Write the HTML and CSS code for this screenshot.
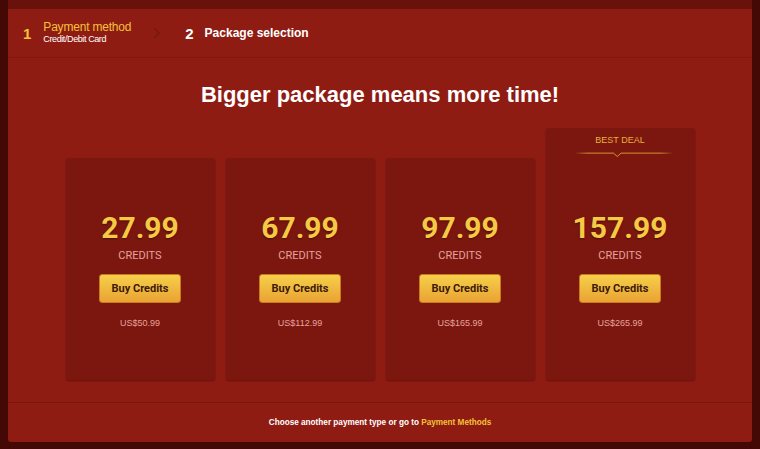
FILE: index.html
```html
<!DOCTYPE html>
<html lang="en">
<head>
    <meta charset="UTF-8">
    <meta name="viewport" content="width=device-width, initial-scale=1.0">
    <title>Package selection</title>
    <link rel="stylesheet" href="styles.css">
</head>
<body>

    <div class="wrap">
        <div class="topbar"></div>

        <div class="panel">
            <!-- Steps -->
            <div class="steps">
                <div class="step done">
                    <span class="step-num">1</span>
                    <div class="step-text">
                        <div class="step-title">Payment method</div>
                        <div class="step-sub">Credit/Debit Card</div>
                    </div>
                </div>
                <svg class="chevron" width="8" height="12" viewBox="0 0 8 12">
                    <path d="M1 1 L6 6 L1 11" fill="none" stroke="#7a170f" stroke-width="1.5"/>
                </svg>
                <div class="step active">
                    <span class="step-num">2</span>
                    <div class="step-title">Package selection</div>
                </div>
            </div>

            <h1 class="title">Bigger package means more time!</h1>

            <!-- Packages -->
            <div class="packages">
                <div class="card">
                    <div class="price">27.99</div>
                    <div class="unit">CREDITS</div>
                    <button class="buy-btn">Buy Credits</button>
                    <div class="cost">US$50.99</div>
                </div>
                <div class="card">
                    <div class="price">67.99</div>
                    <div class="unit">CREDITS</div>
                    <button class="buy-btn">Buy Credits</button>
                    <div class="cost">US$112.99</div>
                </div>
                <div class="card">
                    <div class="price">97.99</div>
                    <div class="unit">CREDITS</div>
                    <button class="buy-btn">Buy Credits</button>
                    <div class="cost">US$165.99</div>
                </div>
                <div class="card best">
                    <div class="best-head">
                        <div class="best-label">BEST DEAL</div>
                        <svg class="best-line" width="128" height="8" viewBox="0 0 128 8">
                            <defs>
                                <linearGradient id="fade" x1="0" x2="1" y1="0" y2="0">
                                    <stop offset="0" stop-color="#e0a030" stop-opacity="0.1"/>
                                    <stop offset="0.12" stop-color="#e0a030"/>
                                    <stop offset="0.88" stop-color="#e0a030"/>
                                    <stop offset="1" stop-color="#e0a030" stop-opacity="0.1"/>
                                </linearGradient>
                            </defs>
                            <path d="M0 1.5 L50 1.5 L55 6 L60 1.5 L128 1.5" fill="none" stroke="url(#fade)" stroke-width="1.2"/>
                        </svg>
                    </div>
                    <div class="price">157.99</div>
                    <div class="unit">CREDITS</div>
                    <button class="buy-btn">Buy Credits</button>
                    <div class="cost">US$265.99</div>
                </div>
            </div>

            <div class="footer">
                Choose another payment type or go to <a href="#">Payment Methods</a>
            </div>
        </div>
    </div>

</body>
</html>
```

FILE: styles.css
```css
body {
    background-color: #440905;
    margin: 0;
    padding: 0;
    font-family: "Liberation Sans", Arial, sans-serif;
    color: white;
}
.wrap {
    margin: 0 8px;
}
.topbar {
    height: 9px;
    background: #68120b;
}
.panel {
    background: #8f1c13;
    height: 433px;
    border-radius: 0 0 3px 3px;
    display: flex;
    flex-direction: column;
}
.steps {
    height: 48px;
    border-bottom: 1px solid #7e1810;
    display: flex;
    align-items: center;
    padding-left: 15px;
}
.step {
    display: flex;
    align-items: center;
}
.step-num {
    font-weight: bold;
    font-size: 15px;
    margin-right: 12px;
}
.step.done .step-num {
    color: #f2c33a;
}
.step.done .step-title {
    color: #f2c33a;
    font-size: 12px;
    line-height: 14px;
    letter-spacing: -0.2px;
}
.step-sub {
    font-size: 9px;
    line-height: 11px;
    letter-spacing: -0.4px;
}
.step-text {
    padding-bottom: 1px;
}
.chevron {
    margin: 0 0 0 22px;
}
.step.active {
    margin-left: 24px;
}
.step.active .step-num {
    margin-right: 11px;
}
.step.active .step-title {
    font-weight: bold;
    font-size: 12px;
}
.title {
    margin: 22px 0 0;
    text-align: center;
    font-size: 22px;
    line-height: 30px;
    font-weight: bold;
}
.packages {
    display: flex;
    justify-content: center;
    align-items: flex-end;
    gap: 11px;
    margin-top: 18px;
    height: 252px;
}
.card {
    width: 149px;
    height: 172px;
    padding-top: 50px;
    background: #7c1710;
    border-radius: 3px;
    box-shadow: 0 1px 2px rgba(60, 5, 2, 0.5);
    display: flex;
    flex-direction: column;
    align-items: center;
    font-family: Roboto, "Liberation Sans", sans-serif;
}
.card.best {
    height: 202px;
}
.best-head {
    height: 30px;
    margin-top: -50px;
    margin-bottom: 50px;
    display: flex;
    flex-direction: column;
    align-items: center;
}
.best-label {
    margin-top: 5px;
    font-size: 9px;
    line-height: 14px;
    color: #e8b03a;
    font-family: "Liberation Sans", Arial, sans-serif;
}
.best-line {
    margin-top: 5px;
    margin-left: 8px;
}
.price {
    font-size: 30px;
    line-height: 40px;
    font-weight: bold;
    color: #f5c944;
    text-shadow: 0 1px 2px rgba(60, 5, 2, 0.7);
}
.unit {
    font-size: 11px;
    line-height: 16px;
    color: #e8a39b;
}
.buy-btn {
    margin-top: 10px;
    width: 82px;
    height: 29px;
    border: 1px solid #c97a1c;
    border-radius: 3px;
    background: linear-gradient(#f6cf4a, #e9a332);
    color: #3b1a08;
    font-family: Roboto, "Liberation Sans", sans-serif;
    font-weight: bold;
    font-size: 11px;
    cursor: pointer;
    padding: 0;
}
.buy-btn:hover {
    background: #f6cf4a;
}
.cost {
    margin-top: 12px;
    font-size: 9px;
    line-height: 16px;
    color: #e8a39b;
    font-family: "Liberation Sans", Arial, sans-serif;
}
.footer {
    margin-top: 22px;
    border-top: 1px solid #7a160f;
    padding-top: 13px;
    text-align: center;
    font-size: 8.2px;
    line-height: 14px;
    font-weight: bold;
}
.footer a {
    color: #f2c33a;
    text-decoration: none;
}
```
